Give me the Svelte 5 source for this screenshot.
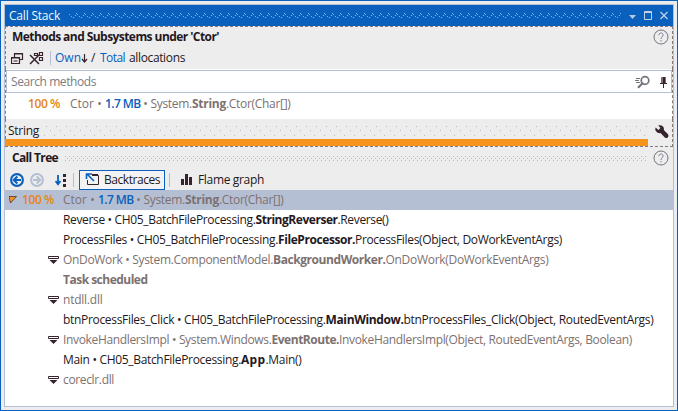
<script>
  // Spreads a run of text evenly over its column width.
  function fit(node, width) {
    const range = document.createRange();
    range.selectNodeContents(node);
    const natural = range.getBoundingClientRect().width;
    node.style.letterSpacing = `${(width - natural) / node.textContent.length}px`;
  }

  const rows = [
    { parts: [['Reverse • CH05_BatchFileProcessing.', 192.5], ['StringReverser', 82, 1], ['.Reverse()', 51]] },
    { parts: [['ProcessFiles • CH05_BatchFileProcessing.', 215], ['FileProcessor.', 77, 1], ['ProcessFiles(Object, DoWorkEventArgs)', 207]] },
    { dim: true, fold: true, parts: [['OnDoWork • System.ComponentModel.', 210], ['BackgroundWorker.', 112.5, 1], ['OnDoWork(DoWorkEventArgs)', 163]] },
    { dim: true, parts: [['Task scheduled', 84.5, 1]] },
    { dim: true, fold: true, parts: [['ntdll.dll', 39.5]] },
    { parts: [['btnProcessFiles_Click • CH05_BatchFileProcessing.', 262.5], ['MainWindow.', 78, 1], ['btnProcessFiles_Click(Object, RoutedEventArgs)', 250]] },
    { dim: true, fold: true, parts: [['InvokeHandlersImpl • System.Windows.', 208.5], ['EventRoute.', 67.5, 1], ['InvokeHandlersImpl(Object, RoutedEventArgs, Boolean)', 293]] },
    { parts: [['Main • CH05_BatchFileProcessing.', 178], ['App', 24.5, 1], ['.Main()', 36]] },
    { dim: true, fold: true, parts: [['coreclr.dll', 51]] }
  ];
</script>

{#snippet run(text, width, bold = false, tone = '')}
  <span class="run {tone}" class:bold style="width:{width}px" use:fit={width}>{text}</span>
{/snippet}

{#snippet help()}
  <svg class="help" width="16" height="16" viewBox="0 0 16 16" fill="none" stroke="#77727c">
    <circle cx="8" cy="8" r="7" />
    <path d="M5.8 6.2C5.8 3.3 10.2 3.4 10.1 6C10.1 7.7 8 7.8 8 10M8 11v1.3" stroke="#79829d" />
  </svg>
{/snippet}

{#snippet allocation()}
  {@render run('Ctor', 24, false, 'dim')}
  {@render run(' • ', 11, false, 'dim')}
  {@render run('1.7 MB', 35.5, true, 'blue thin')}
  {@render run(' • System.', 51.5, false, 'dim')}
  {@render run('String', 34, true, 'dim')}
  {@render run('.Ctor(Char[])', 64.5, false, 'dim')}
{/snippet}

<div class="window">
  <div class="panel">
    <header class="title">
      {@render run('Call Stack', 51)}
      <svg class="grip" height="5">
        <defs><pattern id="wave" width="8" height="5" patternUnits="userSpaceOnUse"><path d="M0 1h1v1h-1zM2 3h1v1h-1zM4 4h1v1h-1zM6 2h1v1h-1zM7 0h1v1h-1z" fill="#83b4e8" /></pattern></defs>
        <rect width="100%" height="5" fill="url(#wave)" />
      </svg>
      <svg class="controls" width="40" height="12" viewBox="0 0 40 12">
        <path d="M0 5h7l-3.5 4z" fill="#b9cbe4" />
        <path d="M15.5 1.5h7v8h-7zM15 2.5h8" fill="none" stroke="#c5d3e7" />
        <path d="M31.5 2l7 7m0-7l-7 7" stroke="#c5d3e7" stroke-width="1.2" />
      </svg>
    </header>

    <section class="methods">
      <div class="heading">{@render run("Methods and Subsystems under 'Ctor'", 207, true)}{@render help()}</div>
      <div class="tools">
        <svg width="13" height="13" viewBox="0 0 13 13" fill="none" stroke="#37232d"><path d="M3.5 5V1.5h8v6H9M3 2h9M.5 5.5h8v6h-8zM0 6h9M2.5 9h4" stroke-width="1.2" /></svg>
        <svg class="clear" width="15" height="13" viewBox="0 0 15 13" fill="none" stroke="#37232d"><path d="M1 3l9 9M10 3l-9 9" stroke-width="1.5" /><path d="M5.5 1.5h3v2h-3zM10.5.5h3v3h-3zM10.5 5.5h3v3h-3z" stroke-width="1.2" /></svg>
        <i class="divider"></i>
        {@render run('Own', 26, false, 'blue')}
        <svg class="down" width="8" height="12" viewBox="0 0 8 12" fill="none" stroke="#37232d"><path d="M3.5 2v8M1 7l2.5 3L6 7" stroke-width="1.2" /></svg>
        <span class="slash">/</span>
        {@render run('Total', 25, false, 'blue')}
        <b class="word-gap"></b>
        {@render run('allocations', 56)}
      </div>
    </section>

    <section class="results">
      <div class="search">
        {@render run('Search methods', 85)}
        <svg width="34" height="14" viewBox="0 0 34 14" fill="none" stroke="#77717c">
          <circle cx="10" cy="5.5" r="3.8" stroke-width="1.7" /><path d="M7.5 8.3L3 12.7" stroke-width="2.2" /><path d="M1 3.5h4M0 5.5h4M1 7.5h4" />
          <path d="M26 2h5v6h-5z" fill="#77717c" stroke="none" /><path d="M28 2h2v6h-2z" fill="#37232d" stroke="none" /><path d="M25 8.5h7M28.5 9v4" stroke="#37232d" />
        </svg>
      </div>
      <div class="result">{@render run('100 %', 32, true, 'orange thin')}<b class="gap"></b>{@render allocation()}</div>
    </section>

    <section class="filter">
      <div class="filter-name">
        {@render run('String', 31)}
        <svg class="speckle" height="10">
          <defs><pattern id="sparse" width="10" height="10" patternUnits="userSpaceOnUse"><path d="M3 0h1v1h-1zM7 4h1v1h-1zM1 9h1v1h-1z" fill="#b4bac8" /></pattern></defs>
          <rect width="100%" height="10" fill="url(#sparse)" />
        </svg>
        <svg class="wrench" width="14" height="14" viewBox="0 0 14 14" fill="#37232d"><path d="M3.2.5Q6-.2 8 1.5Q9.3 3 8.8 5L13 9.2Q14 11 12.7 12.6Q11.2 13.7 9.8 12.4L5.5 8Q2.2 8.7.5 5.5Q0 3.8.7 2.6L3.3 5L5.5 3z" /></svg>
      </div>
      <div class="bar"></div>
    </section>

    <section class="tree-head">
      <div class="heading">
        {@render run('Call Tree', 46, true)}
        <svg class="grip tree-grip" height="5">
          <defs><pattern id="checker" width="4" height="4" patternUnits="userSpaceOnUse"><path d="M0 0h1v1h-1zM2 2h1v1h-1z" fill="#b4bac8" /></pattern></defs>
          <rect width="100%" height="5" fill="url(#checker)" />
        </svg>
        {@render help()}
      </div>
      <div class="actions">
        <svg width="14" height="14" viewBox="0 0 14 14" fill="none" stroke="#0960bd" stroke-width="2.1"><circle cx="7" cy="7" r="5.9" /><path d="M11 7H4M7.3 3.5L3.8 7L7.3 10.5" /></svg>
        <svg class="fwd" width="14" height="14" viewBox="0 0 14 14" fill="none" stroke="#b4bfd3" stroke-width="2"><circle cx="7" cy="7" r="5.9" /><path d="M3 7h7M6.7 3.5L10.2 7L6.7 10.5" /></svg>
        <svg class="sort" width="12" height="14" viewBox="0 0 12 14"><path d="M3 2v9M.5 8L3 11.3L5.5 8" fill="none" stroke="#0960bd" stroke-width="1.8" /><path d="M8 1h3v3H8zM8 6h3v3H8zM8 11h3v3H8z" fill="#37232d" /></svg>
        <i class="divider"></i>
        <button>
          <svg width="14" height="13" viewBox="0 0 14 13" fill="none"><path d="M7 1.5h6M7 2.5h6.5v9h-11V7" stroke="#37232d" /><path d="M9 8L2 1M1.5 6V1H7" stroke="#0960bd" stroke-width="1.6" /></svg>
          {@render run('Backtraces', 56)}
        </button>
        <i class="divider second"></i>
        <svg class="chart" width="11" height="11" viewBox="0 0 11 11" fill="#37232d"><path d="M0 5h3v6H0zM4 0h3v11H4zM8 3h3v8H8z" /></svg>
        {@render run('Flame graph', 66)}
      </div>
    </section>

    <section class="tree">
      <div class="row selected">
        <svg width="8" height="8" viewBox="0 0 8 8"><path d="M0 .5h7.5L1.5 7z" fill="#f7941d" stroke="#37232d" stroke-width=".7" /></svg>
        {@render run('100 %', 32, true, 'orange thin')}
        <b class="gap"></b>
        {@render allocation()}
      </div>
      {#each rows as row}
        <div class="row" class:dim={row.dim}>
          <span class="fold">
            {#if row.fold}
              <svg width="11" height="8" viewBox="0 0 11 8"><path d="M.5.5h10v2H.5z" fill="none" stroke="#37232d" /><path d="M1.5 4h8L5.5 8z" fill="#37232d" /></svg>
            {/if}
          </span>
          {#each row.parts as [text, width, bold]}{@render run(text, width, !!bold)}{/each}
        </div>
      {/each}
    </section>
  </div>
</div>

<style>
  :global(body) { margin: 0; }
  .window { box-sizing: border-box; width: 678px; height: 411px; padding: 3px; border: 1px solid #0960bd; background: #ededed; color: #241820; font: 12px/18px "Open Sans", "Noto Sans", sans-serif; }
  .panel { box-sizing: border-box; width: 670px; height: 403px; border: 1px solid #b4bfd3; display: flex; flex-direction: column; background: #fff; }
  svg { flex: none; display: block; }
  .run { display: inline-block; flex: none; white-space: pre; }
  .bold { font-weight: 700; }
  .bold.thin { font-weight: 600; }
  .dim { color: #7c7170; }
  .blue { color: #0960bd; }
  .orange { color: #e58612; }
  .title { height: 21px; flex: none; display: flex; align-items: center; padding: 0 4px 0 4px; background: #0960bd; color: #f4f7fb; }
  .grip { flex: 1; min-width: 0; margin: 0 8px 0 9px; }
  .controls { margin-top: 1px; }
  .methods { box-sizing: border-box; height: 43px; flex: none; background: #ededed; border: dashed #857980; border-width: 1px 1px 0 1px; }
  .heading { height: 21px; display: flex; align-items: center; padding: 0 4px 0 7px; }
  .methods .heading { padding: 0 3px 0 6px; height: 20px; }
  .help { margin-left: auto; }
  .tools { height: 22px; display: flex; align-items: center; padding-left: 5px; }
  .clear { margin-left: 5px; }
  .divider { width: 1px; height: 14px; flex: none; background: #b4bfd3; margin: 0 4px 0 6px; }
  .slash { width: 9px; }
  .word-gap { width: 4px; }
  .down { margin-right: 2px; }
  .results { box-sizing: border-box; height: 50px; flex: none; border: dashed #857980; border-width: 0 1px; padding-top: 1px; }
  .search { box-sizing: border-box; height: 23px; border: 1px solid #b4bfd3; display: flex; align-items: center; justify-content: space-between; padding: 0 2px 0 4px; color: #7c7c82; }
  .result { height: 22px; display: flex; align-items: center; padding-left: 22px; }
  .gap { width: 10px; flex: none; }
  .selected .gap { width: 9px; }
  .filter { box-sizing: border-box; height: 28px; flex: none; background: #ededed; border-bottom: 1px dashed #857980; border-right: 1px dashed #857980; }
  .filter-name { box-sizing: border-box; height: 20px; padding: 0 3px; display: flex; align-items: center; border-left: 1px dashed #857980; padding-left: 2px; }
  .filter-name .run { margin-top: 4px; }
  .speckle { flex: 1; min-width: 0; margin: 4px 8px 0 4px; }
  .wrench { margin-top: 5px; }
  .bar { width: 643px; height: 7px; background: #f7941d; }
  .tree-head { height: 43px; flex: none; background: #ededed; }
  .tree-head .heading { height: 22px; }
  .tree-grip { margin: 0 7px 0 7px; }
  .tree-head .help { margin-left: 0; }
  .actions { height: 21px; display: flex; align-items: center; padding-left: 5px; }
  .fwd { margin-left: 6px; }
  .sort { margin-left: 11px; }
  button { box-sizing: border-box; flex: none; width: 86px; height: 20px; margin-left: 1px; padding: 0 4px 0 5px; border: 1px solid #0960bd; background: #f3f3f3; display: flex; align-items: center; justify-content: space-between; font: inherit; color: inherit; }
  .divider.second { margin-right: 11px; margin-left: 4px; }
  .chart { margin-right: 6px; }
  .row { height: 20px; display: flex; align-items: center; }
  .selected { background: #b4bfd3; padding-left: 4px; }
  .selected svg { margin-right: 5px; }
  .fold { width: 15px; padding-left: 43px; flex: none; }
</style>
